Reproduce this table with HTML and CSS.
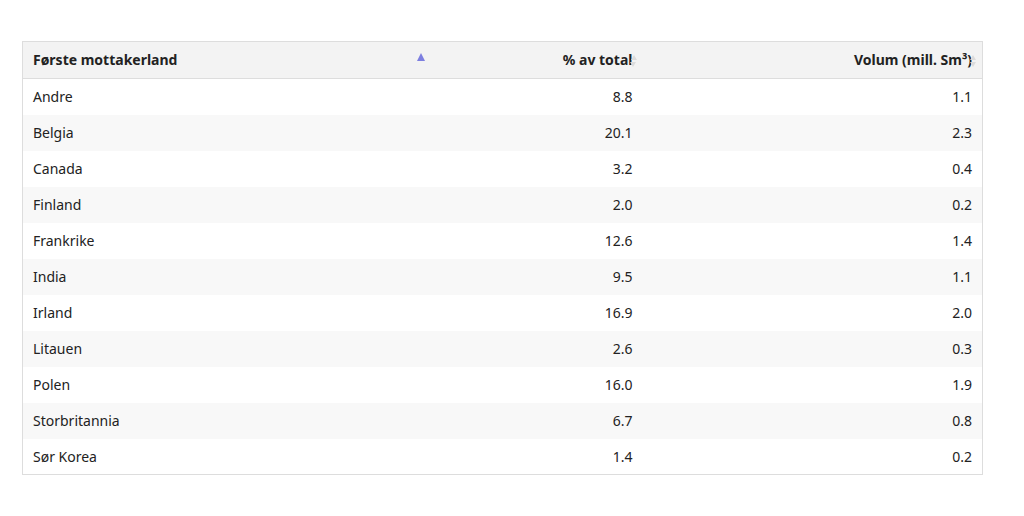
FILE: index.html
```html
<!DOCTYPE html>
<html lang="no">
<head>
<meta charset="utf-8">
<link rel="stylesheet" href="styles.css">
</head>
<body>
<div class="wrap">
<table class="tbl">
<thead>
<tr>
<th class="c1">Første mottakerland<span class="sort asc"></span></th>
<th class="num c2">% av total<span class="sort both"></span></th>
<th class="num c3">Volum (mill. Sm³)<span class="sort both"></span></th>
</tr>
</thead>
<tbody>
<tr><td>Andre</td><td class="num">8.8</td><td class="num">1.1</td></tr>
<tr><td>Belgia</td><td class="num">20.1</td><td class="num">2.3</td></tr>
<tr><td>Canada</td><td class="num">3.2</td><td class="num">0.4</td></tr>
<tr><td>Finland</td><td class="num">2.0</td><td class="num">0.2</td></tr>
<tr><td>Frankrike</td><td class="num">12.6</td><td class="num">1.4</td></tr>
<tr><td>India</td><td class="num">9.5</td><td class="num">1.1</td></tr>
<tr><td>Irland</td><td class="num">16.9</td><td class="num">2.0</td></tr>
<tr><td>Litauen</td><td class="num">2.6</td><td class="num">0.3</td></tr>
<tr><td>Polen</td><td class="num">16.0</td><td class="num">1.9</td></tr>
<tr><td>Storbritannia</td><td class="num">6.7</td><td class="num">0.8</td></tr>
<tr><td>Sør Korea</td><td class="num">1.4</td><td class="num">0.2</td></tr>
</tbody>
</table>
</div>
</body>
</html>
```
FILE: styles.css
```css
html, body {
  margin: 0;
  padding: 0;
  background: #ffffff;
}
body {
  font-family: "Noto Sans", "Open Sans", sans-serif;
  font-size: 14px;
  color: #222222;
}
.wrap {
  padding: 41px 41px 0 22px;
}
.tbl {
  width: 961px;
  border-collapse: collapse;
  border: 1px solid #dddddd;
  table-layout: fixed;
}
.tbl th {
  position: relative;
  background: #f3f3f3;
  font-weight: 700;
  text-align: left;
  height: 37px;
  padding: 0 10px 2px;
  border-bottom: 1px solid #dddddd;
  box-sizing: border-box;
}
.tbl td {
  height: 36px;
  padding: 0 10px;
  box-sizing: border-box;
}
.tbl tbody tr:nth-child(even) td {
  background: #f8f8f8;
}
.c1 { width: 410px; }
.c2 { width: 210px; }
.tbl .num { text-align: right; }
.sort {
  position: absolute;
  width: 0;
  height: 0;
}
.sort.asc {
  right: 8px;
  top: 11px;
  border-left: 4.5px solid transparent;
  border-right: 4.5px solid transparent;
  border-bottom: 8px solid #7d7fe0;
}
.sort.both {
  right: 6px;
  top: 13px;
  border-left: 3.5px solid transparent;
  border-right: 3.5px solid transparent;
  border-bottom: 5px solid #dcdcdc;
}
.sort.both::after {
  content: "";
  position: absolute;
  left: -3.5px;
  top: 7px;
  width: 0;
  height: 0;
  border-left: 3.5px solid transparent;
  border-right: 3.5px solid transparent;
  border-top: 5px solid #dcdcdc;
}
```
